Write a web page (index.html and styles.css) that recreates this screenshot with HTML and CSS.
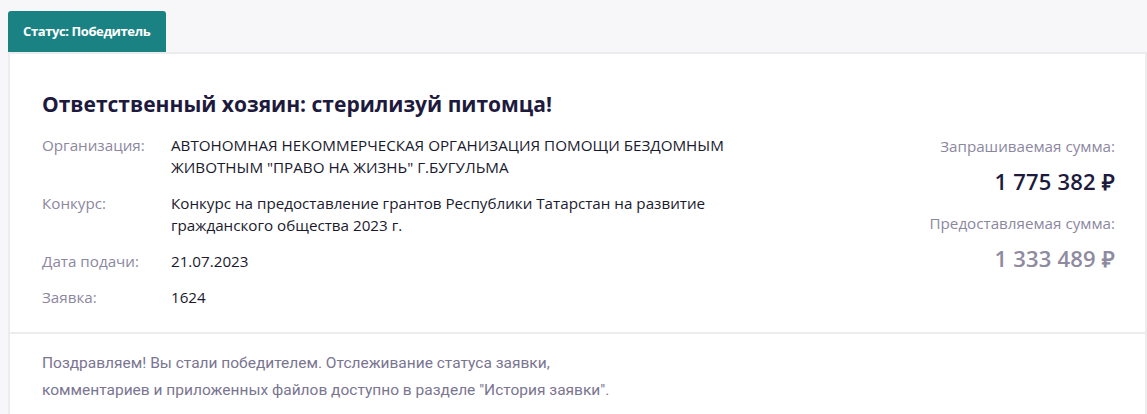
FILE: index.html
```html
<!DOCTYPE html>
<html lang="ru">
<head>
<meta charset="utf-8">
<link rel="stylesheet" href="styles.css">
</head>
<body>
<div class="wrap">
  <div class="tab">Статус: Победитель</div>
  <div class="card">
    <div class="main">
      <h1 class="title">Ответственный хозяин: стерилизуй питомца!</h1>
      <div class="body">
        <div class="info">
          <div class="row"><div class="label">Организация:</div><div class="value">АВТОНОМНАЯ НЕКОММЕРЧЕСКАЯ ОРГАНИЗАЦИЯ ПОМОЩИ БЕЗДОМНЫМ ЖИВОТНЫМ "ПРАВО НА ЖИЗНЬ" Г.БУГУЛЬМА</div></div>
          <div class="row"><div class="label">Конкурс:</div><div class="value">Конкурс на предоставление грантов Республики Татарстан на развитие гражданского общества 2023 г.</div></div>
          <div class="row"><div class="label">Дата подачи:</div><div class="value">21.07.2023</div></div>
          <div class="row"><div class="label">Заявка:</div><div class="value">1624</div></div>
        </div>
        <div class="sums">
          <div class="sum-label">Запрашиваемая сумма:</div>
          <div class="sum requested">1 775 382 ₽</div>
          <div class="sum-label">Предоставляемая сумма:</div>
          <div class="sum granted">1 333 489 ₽</div>
        </div>
      </div>
    </div>
    <div class="footer">
      <p>Поздравляем! Вы стали победителем. Отслеживание статуса заявки,<br>комментариев и приложенных файлов доступно в разделе "История заявки".</p>
    </div>
  </div>
</div>
</body>
</html>
```

FILE: styles.css
```css
html, body {
  margin: 0;
  padding: 0;
  background: #f7f7f9;
}
body {
  font-family: "Open Sans", Lato, sans-serif;
}
.wrap {
  padding: 11px 0 0 8px;
}
.tab {
  display: inline-block;
  background: #1b8283;
  color: #fff;
  font-size: 13px;
  font-weight: 700;
  line-height: 41px;
  padding: 0 15px;
  width: 128px;
  border-radius: 3px 3px 0 0;
  letter-spacing: -0.4px;
  white-space: nowrap;
}
.card {
  background: #fff;
  border: 2px solid #ececec;
  border-bottom: none;
  height: 360px;
}
.main {
  padding: 36px 30px 24px 32px;
  border-bottom: 2px solid #ececec;
}
.title {
  margin: 0 0 16px;
  font-size: 21px;
  font-weight: 700;
  line-height: 28px;
  color: #1d1a3d;
}
.body {
  display: flex;
  justify-content: space-between;
}
.info {
  display: flex;
  flex-direction: column;
  gap: 14px;
  width: 720px;
}
.row {
  display: flex;
  font-size: 15.2px;
  line-height: 22px;
}
.label {
  width: 129px;
  flex: none;
  color: #8c87a0;
}
.value {
  color: #1a1a2e;
  font-weight: 500;
  width: 575px;
}
.sums {
  text-align: right;
  font-size: 15.2px;
  padding-top: 1px;
}
.sum-label {
  color: #8c87a0;
  line-height: 22px;
}
.sum {
  font-size: 22px;
  font-weight: 600;
  line-height: 28px;
  margin: 10px 0 17px;
  letter-spacing: 0.2px;
}
.sum:last-child {
  margin-bottom: 0;
}
.requested { color: #1d1a3d; }
.granted { color: #8e8aa0; }
.footer {
  padding: 16px 32px;
}
.footer p {
  margin: 0;
  font-family: Roboto, sans-serif;
  font-size: 15.5px;
  line-height: 27px;
  color: #7a7590;
}
```
